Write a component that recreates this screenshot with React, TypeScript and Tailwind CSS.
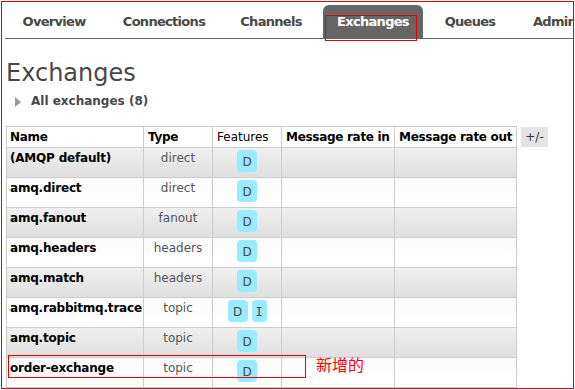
const tabs = [
  { label: "Overview", width: "w-[96px]" },
  { label: "Connections", width: "w-[110px]" },
  { label: "Channels", width: "w-[90px]" },
  { label: "Exchanges", width: "w-[100px]", active: true },
  { label: "Queues", width: "w-[80px]" },
  { label: "Admin", width: "w-[75px]" },
];

const exchanges = [
  { name: "(AMQP default)", type: "direct", features: ["D"] },
  { name: "amq.direct", type: "direct", features: ["D"] },
  { name: "amq.fanout", type: "fanout", features: ["D"] },
  { name: "amq.headers", type: "headers", features: ["D"] },
  { name: "amq.match", type: "headers", features: ["D"] },
  { name: "amq.rabbitmq.trace", type: "topic", features: ["D", "I"] },
  { name: "amq.topic", type: "topic", features: ["D"] },
  { name: "order-exchange", type: "topic", features: ["D"] },
];

const cell = "border-r border-b border-[#cccccc]";

const Badge = ({ label }: { label: string }) => (
  <span
    className={`h-[22px] rounded-[4px] bg-[#99ebff] pt-[5px] text-center text-[12px] leading-[15px] text-[#484848] ${
      label === "I"
        ? "w-[15px] font-['DejaVu_Sans_Mono',monospace]"
        : "w-[20px]"
    }`}
  >
    {label}
  </span>
);

export default function App() {
  return (
    <div className="relative h-[390px] w-[575px] overflow-hidden bg-white font-['DejaVu_Sans',Verdana,sans-serif]">
      <div className="ml-px mt-px h-[388px] w-[573px] overflow-hidden border border-[#e60000]">
        {/* top menu */}
        <nav className="ml-[3px] border-b border-[#666666] pt-[3px]">
          <ul className="flex gap-[7px] pl-px text-[13px] font-bold tracking-[-0.7px]">
            {tabs.map((tab) => (
              <li
                key={tab.label}
                className={`flex h-[33px] shrink-0 items-center justify-center ${tab.width} ${
                  tab.active
                    ? "rounded-t-[6px] bg-[#666666] text-white"
                    : "text-[#484848]"
                }`}
              >
                {tab.label}
              </li>
            ))}
          </ul>
        </nav>

        <h1 className="mt-[20px] pl-[4px] text-[24px] leading-[28px] text-[#484848]">
          Exchanges
        </h1>

        <div className="mt-[7px] flex items-center gap-[10px] pl-[13px]">
          <span className="h-0 w-0 border-y-[5px] border-l-[6px] border-y-transparent border-l-[#999999]" />
          <span className="text-[12px] font-bold leading-[15px] text-[#484848]">
            All exchanges (8)
          </span>
        </div>

        <div className="mt-[17px] ml-[4px] flex items-start gap-[4px]">
          <div className="grid grid-cols-[137px_69px_69px_113px_122px] border-l border-t border-[#cccccc] text-[12px] leading-[15px]">
            <div className={`${cell} h-[21px] pl-[3px] pt-[3px] font-bold tracking-[-0.3px] text-black`}>
              Name
            </div>
            <div className={`${cell} h-[21px] pl-[4px] pt-[3px] font-bold tracking-[-0.3px] text-black`}>
              Type
            </div>
            <div className={`${cell} h-[21px] pl-[4px] pt-[3px] text-black`}>
              Features
            </div>
            <div className={`${cell} h-[21px] whitespace-nowrap pl-[4px] pt-[3px] font-bold tracking-[-0.3px] text-black`}>
              Message rate in
            </div>
            <div className={`${cell} h-[21px] whitespace-nowrap pl-[4px] pt-[3px] font-bold tracking-[-0.3px] text-black`}>
              Message rate out
            </div>

            {exchanges.map((ex, i) => {
              const bg =
                i % 2 === 0
                  ? "bg-gradient-to-b from-[#f0f0f0] to-[#dfdfdf]"
                  : "bg-gradient-to-b from-[#fbfbfb] to-[#ffffff]";
              return (
                <div key={ex.name} className="contents">
                  <div className={`${cell} ${bg} h-[30px] whitespace-nowrap pl-[3px] pt-[3px] font-bold tracking-[-0.2px] text-black`}>
                    {ex.name}
                  </div>
                  <div className={`${cell} ${bg} h-[30px] pt-[3px] text-center text-[#555555]`}>
                    {ex.type}
                  </div>
                  <div className={`${cell} ${bg} flex h-[30px] justify-center gap-[4px] pt-[2px]`}>
                    {ex.features.map((f) => (
                      <Badge key={f} label={f} />
                    ))}
                  </div>
                  <div className={`${cell} ${bg} h-[30px]`} />
                  <div className={`${cell} ${bg} h-[30px]`} />
                </div>
              );
            })}
          </div>

          <div className="mt-px flex h-[20px] w-[27px] items-center justify-center bg-[#e4e4e4] text-[12px] text-[#333333]">
            +/-
          </div>
        </div>
      </div>

      {/* red annotations */}
      <div className="absolute left-[325px] top-[15px] h-[26px] w-[92px] border border-[#e60000]" />
      <div className="absolute left-[8px] top-[355px] h-[23px] w-[298px] border border-[#e60000]" />
      <span className="absolute left-[316px] top-[356px] font-['Noto_Sans_CJK_SC',sans-serif] text-[16px] leading-[16px] text-[#ff0000]">
        新增的
      </span>
    </div>
  );
}
